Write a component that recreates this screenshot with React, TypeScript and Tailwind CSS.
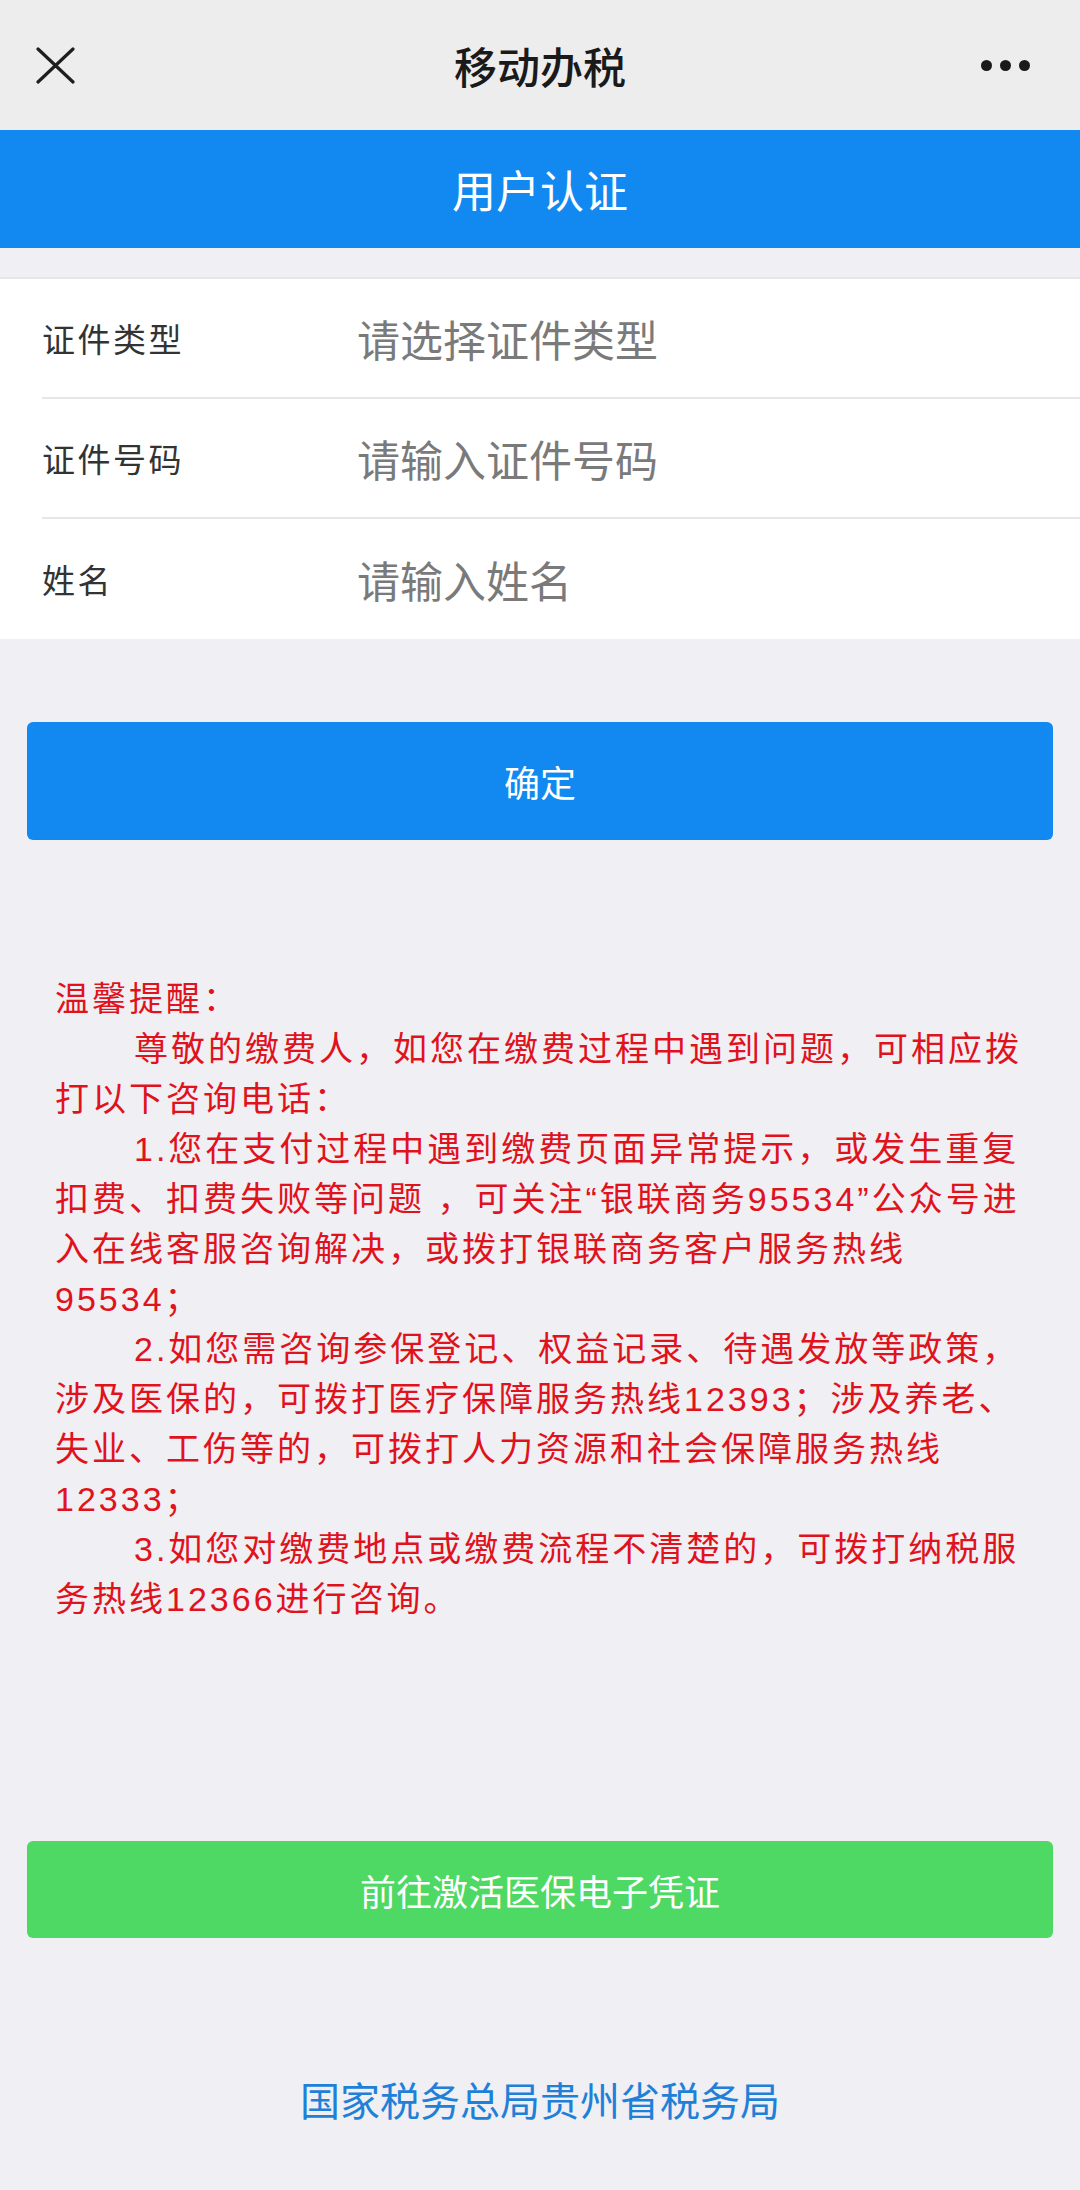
import React from "react";

const CJK = { fontFamily: '"Noto Sans CJK SC", "Noto Sans", sans-serif' };
const MIX = { fontFamily: '"Liberation Sans", "Noto Sans CJK SC", sans-serif' };

function Row({ label, placeholder, last }: { label: string; placeholder: string; last?: boolean }) {
  return (
    <div className={"ml-[42px] h-[120px] flex items-center " + (last ? "" : "border-b-2 border-[#e6e6e8]")}>
      <div className="w-[315px] text-[33px] tracking-[2.5px] text-[#333333] leading-none">{label}</div>
      <div className="text-[43px] text-[#7a7a7a] leading-none">{placeholder}</div>
    </div>
  );
}

export default function App() {
  const lines: { t: string; indent?: boolean }[] = [
    { t: "温馨提醒：" },
    { t: "尊敬的缴费人，如您在缴费过程中遇到问题，可相应拨", indent: true },
    { t: "打以下咨询电话：" },
    { t: "1.您在支付过程中遇到缴费页面异常提示，或发生重复", indent: true },
    { t: "扣费、扣费失败等问题 ，可关注“银联商务95534”公众号进" },
    { t: "入在线客服咨询解决，或拨打银联商务客户服务热线" },
    { t: "95534；" },
    { t: "2.如您需咨询参保登记、权益记录、待遇发放等政策，", indent: true },
    { t: "涉及医保的，可拨打医疗保障服务热线12393；涉及养老、" },
    { t: "失业、工伤等的，可拨打人力资源和社会保障服务热线" },
    { t: "12333；" },
    { t: "3.如您对缴费地点或缴费流程不清楚的，可拨打纳税服", indent: true },
    { t: "务热线12366进行咨询。" },
  ];
  return (
    <div className="min-h-screen w-[1080px] bg-[#efeff4] flex flex-col" style={CJK}>
      {/* Top bar */}
      <div className="h-[130px] bg-[#ededed] grid grid-cols-[1fr_auto_1fr] items-center">
        <div className="pl-[36px] flex items-center">
          <svg width="39" height="37" viewBox="0 0 39 37">
            <path d="M2 2 L37 35 M37 2 L2 35" stroke="#1e1e1e" strokeWidth="3.2" strokeLinecap="round" fill="none" />
          </svg>
        </div>
        <div className="text-[43px] font-medium text-[#1a1a1a] leading-none">移动办税</div>
        <div className="flex justify-end pr-[50px] gap-[8px]">
          <span className="w-[11px] h-[11px] rounded-full bg-[#1a1a1a]" />
          <span className="w-[11px] h-[11px] rounded-full bg-[#1a1a1a]" />
          <span className="w-[11px] h-[11px] rounded-full bg-[#1a1a1a]" />
        </div>
      </div>

      {/* Blue title */}
      <div className="h-[118px] bg-[#1288f1] flex items-center justify-center">
        <span className="text-[44px] text-white leading-none">用户认证</span>
      </div>

      {/* Form */}
      <div className="mt-[29px] bg-white border-t-2 border-[#e6e6e8]">
        <Row label="证件类型" placeholder="请选择证件类型" />
        <Row label="证件号码" placeholder="请输入证件号码" />
        <Row label="姓名" placeholder="请输入姓名" last />
      </div>

      {/* Confirm button */}
      <div className="mt-[83px] mx-[27px] h-[118px] rounded-[6px] bg-[#1288f1] flex items-center justify-center">
        <span className="text-[36px] text-white leading-none">确定</span>
      </div>

      {/* Reminder */}
      <div className="mt-[134px] pl-[55px] pr-[20px] text-[34px] tracking-[3px] leading-[50px] text-[#e0121c]" style={MIX}>
        {lines.map((l, i) => (
          <div key={i} className={"whitespace-nowrap " + (l.indent ? "pl-[79px]" : "")}>
            {l.t}
          </div>
        ))}
      </div>

      {/* Green button */}
      <div className="mt-[217px] mx-[27px] h-[97px] rounded-[6px] bg-[#4dd964] flex items-center justify-center">
        <span className="text-[36px] text-white leading-none">前往激活医保电子凭证</span>
      </div>

      {/* Footer */}
      <div className="mt-[136px] h-[50px] flex items-center justify-center">
        <span className="text-[40px] text-[#1f80d8] leading-none">国家税务总局贵州省税务局</span>
      </div>
    </div>
  );
}
